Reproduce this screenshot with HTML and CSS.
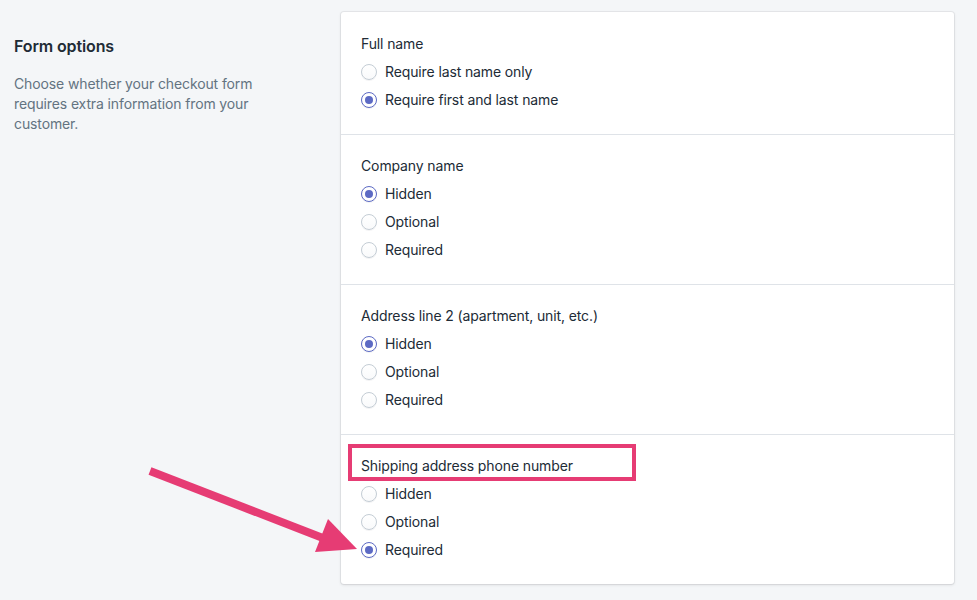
FILE: index.html
```html
<!DOCTYPE html>
<html>
<head>
<meta charset="utf-8">
<link rel="stylesheet" href="styles.css">
</head>
<body>
<div class="layout">
  <div class="annotation">
    <h2 class="heading">Form options</h2>
    <p class="description">Choose whether your checkout form requires extra information from your customer.</p>
  </div>
  <div class="card">
    <div class="section">
      <div class="title">Full name</div>
      <label class="choice"><span class="radio"></span><span>Require last name only</span></label>
      <label class="choice"><span class="radio checked"></span><span>Require first and last name</span></label>
    </div>
    <div class="section">
      <div class="title">Company name</div>
      <label class="choice"><span class="radio checked"></span><span>Hidden</span></label>
      <label class="choice"><span class="radio"></span><span>Optional</span></label>
      <label class="choice"><span class="radio"></span><span>Required</span></label>
    </div>
    <div class="section">
      <div class="title">Address line 2 (apartment, unit, etc.)</div>
      <label class="choice"><span class="radio checked"></span><span>Hidden</span></label>
      <label class="choice"><span class="radio"></span><span>Optional</span></label>
      <label class="choice"><span class="radio"></span><span>Required</span></label>
    </div>
    <div class="section">
      <div class="title">Shipping address phone number</div>
      <label class="choice"><span class="radio"></span><span>Hidden</span></label>
      <label class="choice"><span class="radio"></span><span>Optional</span></label>
      <label class="choice"><span class="radio checked"></span><span>Required</span></label>
    </div>
  </div>
</div>
<svg class="overlay" width="977" height="600" viewBox="0 0 977 600">
  <rect x="350" y="446" width="284" height="33" fill="none" stroke="#e63c74" stroke-width="4"/>
  <line x1="150" y1="471" x2="328" y2="540" stroke="#e63c74" stroke-width="8"/>
  <polygon points="357,549 315,552 328,519" fill="#e63c74"/>
</svg>
</body>
</html>
```
FILE: styles.css
```css
html, body {
  margin: 0;
  padding: 0;
}
body {
  background: #f4f6f8;
  font-family: Inter, "Liberation Sans", Arial, sans-serif;
  color: #212b36;
  letter-spacing: -0.12px;
  width: 977px;
  height: 600px;
  overflow: hidden;
  position: relative;
}
.layout {
  display: flex;
  padding: 12px 23px 0 14px;
}
.annotation {
  width: 327px;
  flex: none;
  padding-top: 22px;
}
.heading {
  margin: 0;
  font-size: 16px;
  line-height: 24px;
  font-weight: 600;
  color: #212b36;
}
.description {
  margin: 16px 0 0;
  width: 250px;
  font-size: 14px;
  line-height: 20px;
  color: #637381;
}
.card {
  flex: 1;
  background: #fff;
  border-radius: 3px;
  box-shadow: 0 0 0 1px rgba(63, 63, 68, 0.07), 0 1px 3px 0 rgba(63, 63, 68, 0.15);
}
.section {
  padding: 17px 20px 20px;
  border-top: 1px solid #dfe3e8;
}
.section:first-child {
  border-top: none;
  padding-top: 18px;
}
.title {
  font-size: 14px;
  line-height: 20px;
  padding: 4px 0;
  color: #212b36;
}
.choice {
  display: flex;
  align-items: center;
  gap: 8px;
  height: 28px;
  font-size: 14px;
  line-height: 20px;
  color: #212b36;
}
.radio {
  width: 16px;
  height: 16px;
  box-sizing: border-box;
  border-radius: 50%;
  border: 1px solid #c4cdd5;
  background: linear-gradient(180deg, #fff, #f9fafb);
  box-shadow: 0 1px 0 0 rgba(22, 29, 37, 0.05);
  position: relative;
  flex: none;
}
.radio.checked {
  border: 1px solid #5c6ac4;
  background: #fff;
}
.radio.checked::after {
  content: "";
  position: absolute;
  left: 3px;
  top: 3px;
  width: 8px;
  height: 8px;
  border-radius: 50%;
  background: #5c6ac4;
}
.overlay {
  position: absolute;
  left: 0;
  top: 0;
  pointer-events: none;
}
```
